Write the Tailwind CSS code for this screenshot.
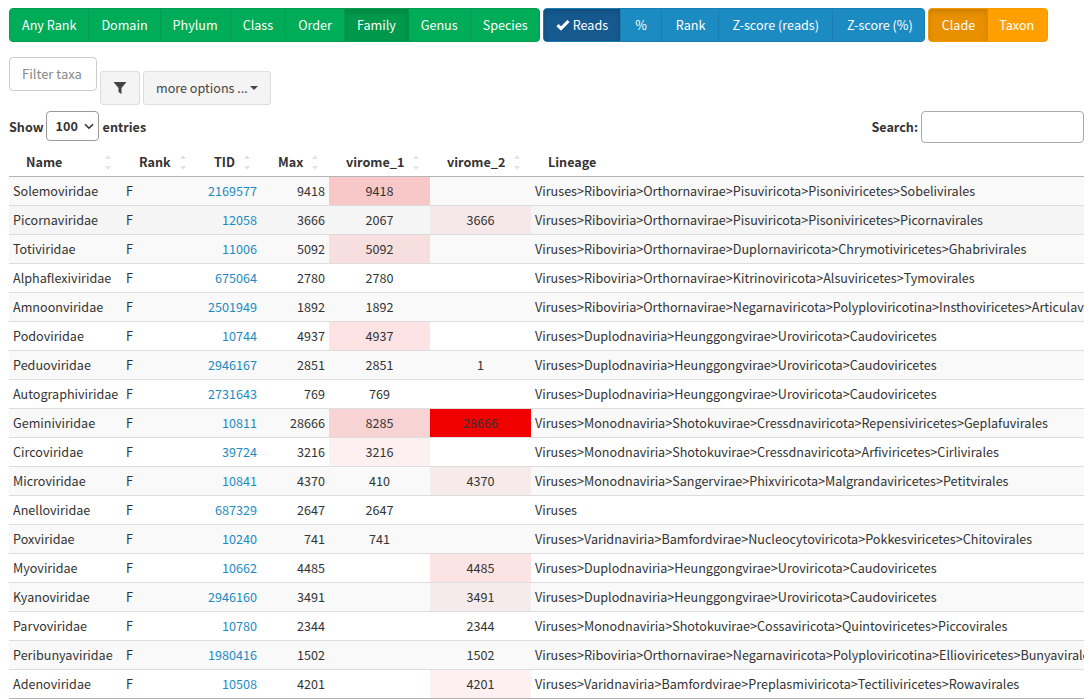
<!DOCTYPE html>
<html lang="en">
<head>
    <meta charset="UTF-8">
    <title>Taxa table</title>
    <script src="https://cdn.jsdelivr.net/npm/@tailwindcss/browser@4"></script>
</head>
<body class="h-[699px] overflow-hidden bg-white text-[#333] font-['Noto_Sans_CJK_JP','Source_Sans_Pro',sans-serif] text-[12.6px]">
    <div class="w-[1084px] pl-[9px] pt-2">
        <!-- button groups -->
        <div class="flex gap-[3px] text-[12.6px] leading-[20px] text-white whitespace-nowrap">
            <div class="flex h-[34px] rounded-[4px] bg-[#00ac58] border border-[#009c50] overflow-hidden">
                <span class="px-3 py-[6px] border-r border-[#009c50]">Any Rank</span>
                <span class="px-3 py-[6px] border-r border-[#009c50]">Domain</span>
                <span class="px-3 py-[6px] border-r border-[#009c50]">Phylum</span>
                <span class="px-3 py-[6px] border-r border-[#009c50]">Class</span>
                <span class="px-3 py-[6px] border-r border-[#009c50]">Order</span>
                <span class="px-3 py-[6px] border-r border-[#009044] bg-[#00984a] shadow-[inset_0_3px_5px_rgba(0,0,0,0.125)]">Family</span>
                <span class="px-3 py-[6px] border-r border-[#009c50]">Genus</span>
                <span class="pl-3 pr-[11px] py-[6px]">Species</span>
            </div>
            <div class="flex h-[34px] rounded-[4px] bg-[#1c8bc2] border border-[#1a7db0] overflow-hidden">
                <span class="flex items-center gap-[3px] px-3 border-r border-[#1a7db0] bg-[#15598f] shadow-[inset_0_3px_5px_rgba(0,0,0,0.125)]">
                    <svg class="w-[14px] h-[12px]" viewBox="0 0 14 12"><path d="M1.5 6.2 L5 9.6 L12.5 2" fill="none" stroke="#fff" stroke-width="3.2"/></svg>
                    Reads
                </span>
                <span class="px-[14px] py-[6px] border-r border-[#1a7db0]">%</span>
                <span class="pl-[14px] pr-[13px] py-[6px] border-r border-[#1a7db0]">Rank</span>
                <span class="px-[13px] py-[6px] border-r border-[#1a7db0]">Z-score (reads)</span>
                <span class="pl-[14px] pr-[11px] py-[6px]">Z-score (%)</span>
            </div>
            <div class="flex h-[34px] rounded-[4px] bg-[#ff9f00] border border-[#f59a00] overflow-hidden">
                <span class="pl-[13px] pr-3 py-[6px] border-r border-[#e08a00] bg-[#e89000] shadow-[inset_0_3px_5px_rgba(0,0,0,0.125)]">Clade</span>
                <span class="pl-[11px] pr-[13px] py-[6px]">Taxon</span>
            </div>
        </div>

        <!-- filter row -->
        <div class="flex items-start mt-[15px] h-[48px]">
            <input type="text" placeholder="Filter taxa" class="w-[88px] h-[34px] px-3 pb-[2px] rounded-[4px] border border-[#ccc] text-[13px] placeholder-[#888] outline-none">
            <button class="flex items-center justify-center w-[40px] h-[34px] mt-[14px] ml-[3px] rounded-[3px] border border-[#ddd] bg-[#f4f4f4]">
                <svg class="w-[14px] h-[14px]" viewBox="0 0 14 14"><path d="M0.5 1 H13.5 L8.5 7 V13 L5.5 11 V7 Z" fill="#444"/></svg>
            </button>
            <button class="flex items-center gap-[2px] h-[34px] mt-[14px] ml-[3px] pl-3 pr-[12px] rounded-[3px] border border-[#ddd] bg-[#f4f4f4] text-[12.6px] text-[#444] whitespace-nowrap">
                more options ...
                <span class="w-0 h-0 border-x-4 border-x-transparent border-t-4 border-t-[#444]"></span>
            </button>
        </div>

        <!-- length and search -->
        <div class="flex justify-between items-start mt-[6px] font-bold">
            <label class="flex items-start h-[30px] gap-[3px]">
                <span class="mt-[7px] -mr-px">Show</span>
                <span class="relative flex">
                    <select class="appearance-none w-[53px] h-[30px] pl-[9px] rounded-[4px] border border-[#999] bg-white text-[12.6px] font-bold outline-none"><option>100</option></select>
                    <svg class="absolute right-[5px] top-[12px] w-[10px] h-[7px]" viewBox="0 0 10 7"><path d="M1 1.2 L5 5.2 L9 1.2" fill="none" stroke="#333" stroke-width="1.6"/></svg>
                </span>
                <span class="mt-[7px] ml-px">entries</span>
            </label>
            <label class="flex items-center h-[32px] gap-[3px]">
                Search:
                <input type="text" class="w-[163px] h-[32px] rounded-[4px] border border-[#aaa] outline-none">
            </label>
        </div>

        <!-- table -->
        <div class="w-[1075px] mt-[5px] overflow-hidden">
            <table class="table-fixed w-[1200px] border-separate border-spacing-0 whitespace-nowrap [&_th]:relative [&_th]:h-[29px] [&_th]:pl-[17px] [&_th]:text-left [&_th]:font-bold [&_th]:border-b [&_th]:border-[#b4b4b4] [&_td]:h-[29px] [&_td]:px-1 [&_td]:py-0 [&_td]:border-b [&_td]:border-[#ddd] [&_tbody_tr:last-child_td]:border-[#b4b4b4] [&_td:nth-child(3)]:text-right [&_td:nth-child(3)]:text-[#1c8bc2] [&_td:nth-child(4)]:text-right [&_td:nth-child(5)]:text-center [&_td:nth-child(6)]:text-center [&_tbody_tr:nth-child(odd)]:bg-[#f9f9f9]">
                <colgroup>
                    <col class="w-[113px]"><col class="w-[75px]"><col class="w-[64px]"><col class="w-[68px]"><col class="w-[101px]"><col class="w-[101px]"><col class="w-[678px]">
                </colgroup>
                <thead>
                    <tr>
                        <th>Name<span class="absolute right-[11px] top-[7px] flex flex-col gap-[7px]"><i class="w-0 h-0 border-x-[3px] border-x-transparent border-b-4 border-b-[#e4e4e4]"></i><i class="w-0 h-0 border-x-[3px] border-x-transparent border-t-4 border-t-[#e4e4e4]"></i></span></th>
                        <th>Rank<span class="absolute right-[11px] top-[7px] flex flex-col gap-[7px]"><i class="w-0 h-0 border-x-[3px] border-x-transparent border-b-4 border-b-[#e4e4e4]"></i><i class="w-0 h-0 border-x-[3px] border-x-transparent border-t-4 border-t-[#e4e4e4]"></i></span></th>
                        <th>TID<span class="absolute right-[11px] top-[7px] flex flex-col gap-[7px]"><i class="w-0 h-0 border-x-[3px] border-x-transparent border-b-4 border-b-[#e4e4e4]"></i><i class="w-0 h-0 border-x-[3px] border-x-transparent border-t-4 border-t-[#e4e4e4]"></i></span></th>
                        <th>Max<span class="absolute right-[11px] top-[7px] flex flex-col gap-[7px]"><i class="w-0 h-0 border-x-[3px] border-x-transparent border-b-4 border-b-[#e4e4e4]"></i><i class="w-0 h-0 border-x-[3px] border-x-transparent border-t-4 border-t-[#e4e4e4]"></i></span></th>
                        <th>virome_1<span class="absolute right-[11px] top-[7px] flex flex-col gap-[7px]"><i class="w-0 h-0 border-x-[3px] border-x-transparent border-b-4 border-b-[#e4e4e4]"></i><i class="w-0 h-0 border-x-[3px] border-x-transparent border-t-4 border-t-[#e4e4e4]"></i></span></th>
                        <th>virome_2<span class="absolute right-[11px] top-[7px] flex flex-col gap-[7px]"><i class="w-0 h-0 border-x-[3px] border-x-transparent border-b-4 border-b-[#e4e4e4]"></i><i class="w-0 h-0 border-x-[3px] border-x-transparent border-t-4 border-t-[#e4e4e4]"></i></span></th>
                        <th>Lineage</th>
                    </tr>
                </thead>
                <tbody>
                    <tr><td>Solemoviridae</td><td>F</td><td>2169577</td><td>9418</td><td class="bg-[#f8c8c8]">9418</td><td></td><td>Viruses&gt;Riboviria&gt;Orthornavirae&gt;Pisuviricota&gt;Pisoniviricetes&gt;Sobelivirales</td></tr>
                    <tr class="!bg-[#f5f5f5]"><td>Picornaviridae</td><td>F</td><td>12058</td><td>3666</td><td>2067</td><td class="bg-[#f5e8e8]">3666</td><td>Viruses&gt;Riboviria&gt;Orthornavirae&gt;Pisuviricota&gt;Pisoniviricetes&gt;Picornavirales</td></tr>
                    <tr><td>Totiviridae</td><td>F</td><td>11006</td><td>5092</td><td class="bg-[#f8dfdf]">5092</td><td></td><td>Viruses&gt;Riboviria&gt;Orthornavirae&gt;Duplornaviricota&gt;Chrymotiviricetes&gt;Ghabrivirales</td></tr>
                    <tr><td>Alphaflexiviridae</td><td>F</td><td>675064</td><td>2780</td><td>2780</td><td></td><td>Viruses&gt;Riboviria&gt;Orthornavirae&gt;Kitrinoviricota&gt;Alsuviricetes&gt;Tymovirales</td></tr>
                    <tr><td>Amnoonviridae</td><td>F</td><td>2501949</td><td>1892</td><td>1892</td><td></td><td>Viruses&gt;Riboviria&gt;Orthornavirae&gt;Negarnaviricota&gt;Polyploviricotina&gt;Insthoviricetes&gt;Articulavirales</td></tr>
                    <tr><td>Podoviridae</td><td>F</td><td>10744</td><td>4937</td><td class="bg-[#fde3e3]">4937</td><td></td><td>Viruses&gt;Duplodnaviria&gt;Heunggongvirae&gt;Uroviricota&gt;Caudoviricetes</td></tr>
                    <tr><td>Peduoviridae</td><td>F</td><td>2946167</td><td>2851</td><td>2851</td><td>1</td><td>Viruses&gt;Duplodnaviria&gt;Heunggongvirae&gt;Uroviricota&gt;Caudoviricetes</td></tr>
                    <tr><td>Autographiviridae</td><td>F</td><td>2731643</td><td>769</td><td>769</td><td></td><td>Viruses&gt;Duplodnaviria&gt;Heunggongvirae&gt;Uroviricota&gt;Caudoviricetes</td></tr>
                    <tr><td>Geminiviridae</td><td>F</td><td>10811</td><td>28666</td><td class="bg-[#f8d3d3]">8285</td><td class="bg-[#f00000]">28666</td><td>Viruses&gt;Monodnaviria&gt;Shotokuvirae&gt;Cressdnaviricota&gt;Repensiviricetes&gt;Geplafuvirales</td></tr>
                    <tr><td>Circoviridae</td><td>F</td><td>39724</td><td>3216</td><td class="bg-[#fdf0f0]">3216</td><td></td><td>Viruses&gt;Monodnaviria&gt;Shotokuvirae&gt;Cressdnaviricota&gt;Arfiviricetes&gt;Cirlivirales</td></tr>
                    <tr><td>Microviridae</td><td>F</td><td>10841</td><td>4370</td><td>410</td><td class="bg-[#f7eaea]">4370</td><td>Viruses&gt;Monodnaviria&gt;Sangervirae&gt;Phixviricota&gt;Malgrandaviricetes&gt;Petitvirales</td></tr>
                    <tr><td>Anelloviridae</td><td>F</td><td>687329</td><td>2647</td><td>2647</td><td></td><td>Viruses</td></tr>
                    <tr><td>Poxviridae</td><td>F</td><td>10240</td><td>741</td><td>741</td><td></td><td>Viruses&gt;Varidnaviria&gt;Bamfordvirae&gt;Nucleocytoviricota&gt;Pokkesviricetes&gt;Chitovirales</td></tr>
                    <tr><td>Myoviridae</td><td>F</td><td>10662</td><td>4485</td><td></td><td class="bg-[#fce4e4]">4485</td><td>Viruses&gt;Duplodnaviria&gt;Heunggongvirae&gt;Uroviricota&gt;Caudoviricetes</td></tr>
                    <tr><td>Kyanoviridae</td><td>F</td><td>2946160</td><td>3491</td><td></td><td class="bg-[#f6ebeb]">3491</td><td>Viruses&gt;Duplodnaviria&gt;Heunggongvirae&gt;Uroviricota&gt;Caudoviricetes</td></tr>
                    <tr><td>Parvoviridae</td><td>F</td><td>10780</td><td>2344</td><td></td><td>2344</td><td>Viruses&gt;Monodnaviria&gt;Shotokuvirae&gt;Cossaviricota&gt;Quintoviricetes&gt;Piccovirales</td></tr>
                    <tr><td>Peribunyaviridae</td><td>F</td><td>1980416</td><td>1502</td><td></td><td>1502</td><td>Viruses&gt;Riboviria&gt;Orthornavirae&gt;Negarnaviricota&gt;Polyploviricotina&gt;Ellioviricetes&gt;Bunyavirales</td></tr>
                    <tr><td>Adenoviridae</td><td>F</td><td>10508</td><td>4201</td><td></td><td class="bg-[#fdf0f0]">4201</td><td>Viruses&gt;Varidnaviria&gt;Bamfordvirae&gt;Preplasmiviricota&gt;Tectiliviricetes&gt;Rowavirales</td></tr>
                </tbody>
            </table>
        </div>
    </div>
</body>
</html>
